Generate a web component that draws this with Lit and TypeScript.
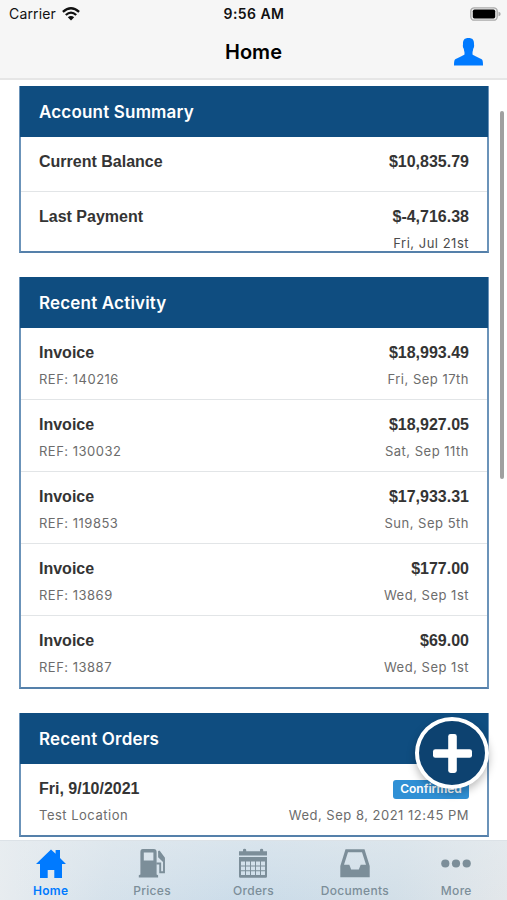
import { LitElement, html, css, svg } from "lit";
import { customElement } from "lit/decorators.js";

const activity = [
  ["REF: 140216", "$18,993.49", "Fri, Sep 17th"],
  ["REF: 130032", "$18,927.05", "Sat, Sep 11th"],
  ["REF: 119853", "$17,933.31", "Sun, Sep 5th"],
  ["REF: 13869", "$177.00", "Wed, Sep 1st"],
  ["REF: 13887", "$69.00", "Wed, Sep 1st"],
];

// Day cells of the calendar icon: three weeks of five days, cut out of its body.
const dayCells = [12.6, 17.4, 22.2]
  .flatMap((y) => [3, 8, 13, 18, 23].map((x) => `M${x} ${y}v3.8h4v-3.8Z`))
  .join("");

const icons = {
  home: svg`<path d="M15 0.5L19.6 4.8V1H24V9L30 15H26V29H18.3V21H11.7V29H4V15H0Z"/>`,
  pump: svg`<g transform="translate(1.8 0)"><path fill-rule="evenodd" d="M4 0H15Q17.8 0 17.8 3V25.5L19.3 26.3V28.5H0V26.3L1.6 25.5V3Q1.6 0 4 0ZM5 3.4V11.4H14.6V3.4Z"/><path d="M20 2.2L25.2 9V23.3H21.4V14.5H17.5" fill="none" stroke="currentColor" stroke-width="1.9"/><path d="M19.3 1.5V8.3L24.5 13.2V8Z"/></g>`,
  calendar: svg`<path d="M1 2.2H5V1Q5 -.3 6.6 -.3T8.2 1V2.2H22V1Q22 -.3 23.6 -.3T25.2 1V2.2H29V6.6H1Z"/><path fill-rule="evenodd" d="${"M1 8H29V27.4Q29 28.7 27.7 28.7H2.3Q1 28.7 1 27.4Z" + dayCells}"/>`,
  tray: svg`<path fill-rule="evenodd" d="M5.5 .2H24.5L29.7 17V28.3H.3V17ZM8 3.2L4 15.8H9.3L11.2 20.5H18.8L20.7 15.8H26L22 3.2Z"/>`,
  more: svg`<circle cx="4.3" cy="14.5" r="4.1"/><circle cx="15" cy="14.5" r="4.1"/><circle cx="25.7" cy="14.5" r="4.1"/>`,
};

const tabs = [
  { id: "home", label: "Home", icon: icons.home },
  { id: "prices", label: "Prices", icon: icons.pump },
  { id: "orders", label: "Orders", icon: icons.calendar },
  { id: "documents", label: "Documents", icon: icons.tray },
  { id: "more", label: "More", icon: icons.more },
];

@customElement("app-root")
export class AppRoot extends LitElement {
  static styles = css`
    :host { display: flex; flex-direction: column; position: relative; width: 507px; height: 900px; overflow: hidden; background: #fff; font-family: Inter, "Liberation Sans", sans-serif; color: #343434; }
    * { box-sizing: border-box; }
    svg { display: block; fill: currentColor; overflow: visible; }
    .top { flex: none; height: 80px; background: #f6f6f6; border-bottom: 2px solid #e6e6e6; color: #111; }
    .status { display: grid; grid-template-columns: 1fr auto 1fr; align-items: center; height: 27px; padding: 0 6px 0 9px; font-size: 14px; }
    .carrier { display: flex; align-items: center; gap: 6px; letter-spacing: .15px; }
    .time { font-weight: 600; letter-spacing: .45px; margin-right: 2px; }
    .battery { justify-self: end; }
    .nav { display: grid; grid-template-columns: 1fr auto 1fr; align-items: center; height: 50px; padding: 0 24px; }
    .title { grid-column: 2; font-size: 20px; font-weight: 600; color: #000; }
    .user { justify-self: end; color: #007aff; }
    .content { flex: 1; min-height: 0; overflow: hidden; display: flex; flex-direction: column; gap: 24px; padding: 6px 18px 0 19px; }
    .card { flex: none; border: 2px solid #6b93b9; border-bottom-color: #5580aa; border-top: 0; }
    .summary { height: 167px; }
    .activity { height: 412px; }
    .orders { height: 124px; }
    .head { height: 51px; margin: 0 -1px; padding-left: 19px; background: #0f4d80; color: #fff; font-size: 17px; font-weight: 600; line-height: 53px; letter-spacing: .18px; }
    .row { height: 72px; padding: 12px 18px 0; border-bottom: 1px solid #e2e5e7; }
    .row.short { height: 55px; }
    .row:last-child { border-bottom: 0; }
    .line { display: flex; justify-content: space-between; align-items: center; height: 26px; font: 700 16px "Liberation Sans", Arial, sans-serif; }
    .sub { font: 400 13px Inter, sans-serif; color: #6c6c6c; letter-spacing: .5px; }
    .dark { color: #4c4c4c; }
    .end { justify-content: flex-end; }
    .badge { width: 76px; height: 19px; border-radius: 3px; background: #3090d5; color: #fff; font: 600 12px/18px Inter, sans-serif; text-align: center; }
    .scroll { position: absolute; top: 111px; right: 3px; width: 4px; height: 368px; border-radius: 2px; background: #a0a0a0; }
    .fab { position: absolute; left: 415px; top: 717px; width: 74px; height: 72px; border: 4px solid #fff; border-radius: 50%; background: #0d4270; color: #fff; display: grid; place-items: center; box-shadow: 0 4px 9px #0004; }
    .tabs { flex: none; height: 60px; display: grid; grid-template-columns: repeat(5, 1fr); border-top: 1px solid #dce2e7; background: linear-gradient(#e6ecf080, #e6ecf000), linear-gradient(100deg, #e9edf0 0%, #d6e2eb 22%, #cbdce9 50%, #d2dfe8 78%, #e3e7ea 100%); }
    .tab { display: flex; flex-direction: column; align-items: center; gap: 5px; padding-top: 8px; color: #7c8e99; font-size: 12px; line-height: 14px; font-weight: 500; letter-spacing: .3px; }
    .active { color: #007aff; font-weight: 600; }
  `;

  private row(a: string, b: string, c: string, d: string) {
    return html`<div class="row"><div class="line"><span>${a}</span><span>${b}</span></div>
      <div class="line sub"><span>${c}</span><span>${d}</span></div></div>`;
  }

  render() {
    return html`
      <header class="top">
        <div class="status">
          <span class="carrier"><span>Carrier</span>
            <svg width="18" height="14" viewBox="0 0 18 14"><g fill="none" stroke="currentColor" stroke-width="2.3"><path d="M.9 4.8Q9-2.4 17.1 4.8"/><path d="M3.8 8Q9 3.3 14.2 8"/></g><path d="M5.8 10.3Q9 7.5 12.2 10.3L9 13.6Z"/></svg>
          </span>
          <span class="time">9:56 AM</span>
          <svg class="battery" width="31" height="14" viewBox="0 0 31 14"><rect x=".8" y=".8" width="26.4" height="12.4" rx="3.5" fill="#eee" stroke="#aaa" stroke-width="1.3"/><rect x="2.8" y="2.6" width="22.4" height="8.8" rx="1.7" fill="#000"/><path d="M28.5 4.8Q30.7 5 30.7 7T28.5 9.2Z" fill="#aaa"/></svg>
        </div>
        <div class="nav"><span class="title">Home</span>
          <svg class="user" width="29" height="28" viewBox="0 0 29 28"><path d="M14.5 0C18.6 0 20.2 2 20 6.2C20.4 8 20 9.7 19.2 10.8C19 12.6 18.6 13.6 18.5 14.5V16.5C19.5 17.8 26.5 20 28.2 21.8Q29 22.7 29 27.5H0Q0 22.7 .8 21.8C2.5 20 9.5 17.8 10.5 16.5V14.5C10.4 13.6 10 12.6 9.8 10.8C9 9.7 8.6 8 9 6.2C8.8 2 10.4 0 14.5 0Z"/></svg>
        </div>
      </header>
      <main class="content">
        <section class="card summary"><div class="head">Account Summary</div>
          <div class="row short"><div class="line"><span>Current Balance</span><span>$10,835.79</span></div></div>
          <div class="row"><div class="line"><span>Last Payment</span><span>$-4,716.38</span></div><div class="line sub dark end">Fri, Jul 21st</div></div>
        </section>
        <section class="card activity"><div class="head">Recent Activity</div>
          ${activity.map(([ref, amount, date]) => this.row("Invoice", amount, ref, date))}
        </section>
        <section class="card orders"><div class="head">Recent Orders</div>
          <div class="row"><div class="line"><span>Fri, 9/10/2021</span><span class="badge">Confirmed</span></div>
            <div class="line sub"><span>Test Location</span><span>Wed, Sep 8, 2021 12:45 PM</span></div></div>
        </section>
      </main>
      <div class="scroll"></div>
      <div class="fab"><svg width="39" height="39" viewBox="0 0 39 39"><rect x="15.2" width="8.6" height="39" rx="2.4"/><rect y="15.2" width="39" height="8.6" rx="2.4"/></svg></div>
      <nav class="tabs">${tabs.map((t) => html`<div class="tab ${t.id === "home" ? "active" : ""}"><svg width="30" height="30" viewBox="0 0 30 30">${t.icon}</svg><span>${t.label}</span></div>`)}</nav>
    `;
  }
}
